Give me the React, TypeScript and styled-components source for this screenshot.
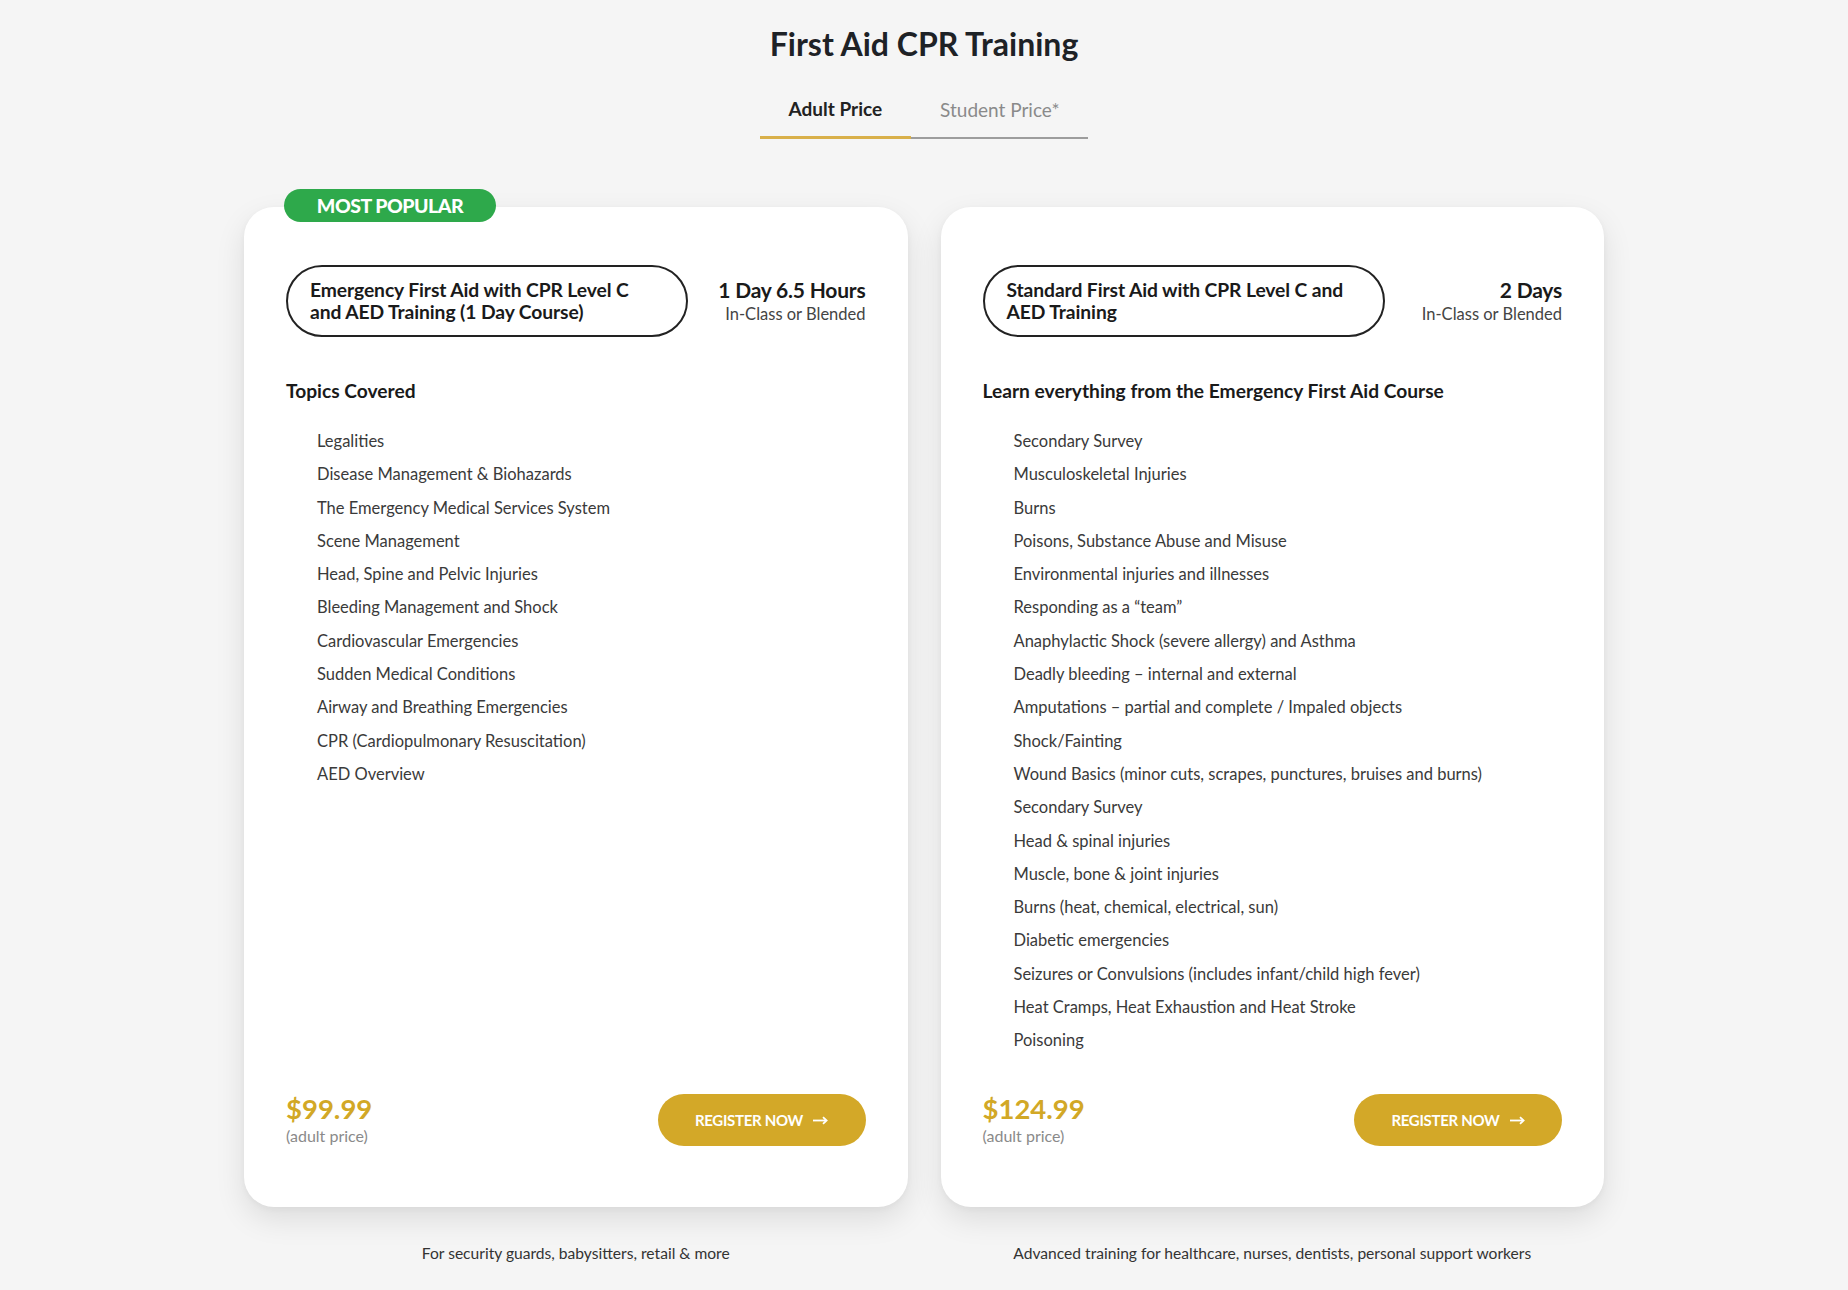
import styled, { createGlobalStyle } from "styled-components";

const GlobalStyle = createGlobalStyle`
  html, body {
    margin: 0;
    padding: 0;
    background: #f5f5f5;
    font-family: Lato, "Open Sans", Arial, sans-serif;
    color: #222;
  }
  * { box-sizing: border-box; }
`;

const Page = styled.main`
  padding: 25px 0 0;
  min-height: 1290px;
`;

const Title = styled.h1`
  margin: 0;
  text-align: center;
  font-size: 32px;
  line-height: 38px;
  font-weight: 700;
  color: #1e2226;
`;

const Tabs = styled.div`
  display: flex;
  justify-content: center;
  align-items: flex-end;
  margin-top: 34px;
`;

const Tab = styled.button<{ $active?: boolean }>`
  border: none;
  background: none;
  font-family: inherit;
  font-size: 19px;
  line-height: 24px;
  padding: 0 29px 15px;
  cursor: pointer;
  font-weight: ${(p) => (p.$active ? 700 : 400)};
  color: ${(p) => (p.$active ? "#222" : "#8a8a8a")};
  border-bottom: ${(p) => (p.$active ? "3px solid #d9b04a" : "2px solid #9d9d9d")};
`;

const Grid = styled.div`
  display: grid;
  grid-template-columns: 1fr 1fr;
  gap: 33px;
  max-width: 1360px;
  margin: 68px auto 0;
`;

const Column = styled.div`
  display: flex;
  flex-direction: column;
`;

const Card = styled.section`
  position: relative;
  flex: 1;
  display: flex;
  flex-direction: column;
  background: #fff;
  border-radius: 30px;
  padding: 58px 42px 60px;
  box-shadow: 0 12px 30px rgba(0, 0, 0, 0.1), 0 2px 6px rgba(0, 0, 0, 0.04);
`;

const Badge = styled.div`
  position: absolute;
  top: -18px;
  left: 40px;
  width: 212px;
  height: 33px;
  border-radius: 17px;
  background: #2ea94b;
  color: #fff;
  font-size: 19.5px;
  font-weight: 900;
  letter-spacing: -0.5px;
  display: flex;
  align-items: center;
  justify-content: center;
  text-transform: uppercase;
`;

const Header = styled.div`
  display: flex;
  align-items: center;
  justify-content: space-between;
`;

const CourseName = styled.div`
  width: 402px;
  height: 72px;
  border: 2px solid #222;
  border-radius: 36px;
  padding: 0 18px 0 22px;
  display: flex;
  align-items: center;
  font-size: 19.3px;
  line-height: 22px;
  font-weight: 700;
  color: #1a1a1a;
  white-space: pre-line;
  letter-spacing: -0.1px;
`;

const Duration = styled.div`
  text-align: right;
  padding-top: 2px;
`;

const Length = styled.div`
  font-size: 21px;
  line-height: 24px;
  font-weight: 700;
  color: #1a1a1a;
  letter-spacing: -0.2px;
`;

const Mode = styled.div`
  font-size: 16.5px;
  line-height: 25px;
  color: #444;
`;

const Heading = styled.h3`
  margin: 42px 0 0;
  font-size: 19.2px;
  line-height: 24px;
  font-weight: 700;
  color: #1a1a1a;
`;

const Topics = styled.ul`
  list-style: none;
  margin: 22px 0 0;
  padding: 0 0 0 31px;
`;

const Topic = styled.li`
  font-size: 16.5px;
  line-height: 33.3px;
  color: #3a3a3a;
`;

const Footer = styled.div`
  margin-top: auto;
  padding-top: 36px;
  display: flex;
  align-items: center;
  justify-content: space-between;
`;

const Price = styled.div`
  font-size: 27.5px;
  line-height: 30px;
  font-weight: 700;
  color: #d2a826;
`;

const PriceNote = styled.div`
  font-size: 16px;
  line-height: 23px;
  color: #8a8a8a;
`;

const Register = styled.button`
  width: 208px;
  height: 52px;
  border: none;
  border-radius: 26px;
  background: #d3a828;
  color: #fff;
  font-family: inherit;
  font-size: 15px;
  font-weight: 700;
  letter-spacing: -0.3px;
  text-transform: uppercase;
  display: flex;
  align-items: center;
  justify-content: center;
  gap: 10px;
  cursor: pointer;
`;

const Caption = styled.p`
  margin: 36px 0 0;
  text-align: center;
  font-size: 15.6px;
  line-height: 20px;
  color: #333;
`;

const Arrow = () => (
  <svg width="15" height="9" viewBox="0 0 15 9" fill="none">
    <path d="M0 4.5h13" stroke="#fff" strokeWidth="1.8" />
    <path d="M10 1.2l3.6 3.3L10 7.8" stroke="#fff" strokeWidth="1.8" fill="none" />
  </svg>
);

type Course = {
  name: string;
  length: string;
  heading: string;
  topics: string[];
  price: string;
  caption: string;
  popular?: boolean;
};

const courses: Course[] = [
  {
    name: "Emergency First Aid with CPR Level C\nand AED Training (1 Day Course)",
    length: "1 Day 6.5 Hours",
    heading: "Topics Covered",
    popular: true,
    price: "$99.99",
    caption: "For security guards, babysitters, retail & more",
    topics: [
      "Legalities",
      "Disease Management & Biohazards",
      "The Emergency Medical Services System",
      "Scene Management",
      "Head, Spine and Pelvic Injuries",
      "Bleeding Management and Shock",
      "Cardiovascular Emergencies",
      "Sudden Medical Conditions",
      "Airway and Breathing Emergencies",
      "CPR (Cardiopulmonary Resuscitation)",
      "AED Overview",
    ],
  },
  {
    name: "Standard First Aid with CPR Level C and\nAED Training",
    length: "2 Days",
    heading: "Learn everything from the Emergency First Aid Course",
    price: "$124.99",
    caption: "Advanced training for healthcare, nurses, dentists, personal support workers",
    topics: [
      "Secondary Survey",
      "Musculoskeletal Injuries",
      "Burns",
      "Poisons, Substance Abuse and Misuse",
      "Environmental injuries and illnesses",
      "Responding as a \u201cteam\u201d",
      "Anaphylactic Shock (severe allergy) and Asthma",
      "Deadly bleeding \u2013 internal and external",
      "Amputations \u2013 partial and complete / Impaled objects",
      "Shock/Fainting",
      "Wound Basics (minor cuts, scrapes, punctures, bruises and burns)",
      "Secondary Survey",
      "Head & spinal injuries",
      "Muscle, bone & joint injuries",
      "Burns (heat, chemical, electrical, sun)",
      "Diabetic emergencies",
      "Seizures or Convulsions (includes infant/child high fever)",
      "Heat Cramps, Heat Exhaustion and Heat Stroke",
      "Poisoning",
    ],
  },
];

export default function App() {
  return (
    <Page>
      <GlobalStyle />
      <Title>First Aid CPR Training</Title>
      <Tabs>
        <Tab $active>Adult Price</Tab>
        <Tab>Student Price*</Tab>
      </Tabs>
      <Grid>
        {courses.map((c) => (
          <Column key={c.price}>
            <Card>
              {c.popular && <Badge>Most Popular</Badge>}
              <Header>
                <CourseName>{c.name}</CourseName>
                <Duration>
                  <Length>{c.length}</Length>
                  <Mode>In-Class or Blended</Mode>
                </Duration>
              </Header>
              <Heading>{c.heading}</Heading>
              <Topics>
                {c.topics.map((t, i) => (
                  <Topic key={i}>{t}</Topic>
                ))}
              </Topics>
              <Footer>
                <div>
                  <Price>{c.price}</Price>
                  <PriceNote>(adult price)</PriceNote>
                </div>
                <Register>
                  Register Now <Arrow />
                </Register>
              </Footer>
            </Card>
            <Caption>{c.caption}</Caption>
          </Column>
        ))}
      </Grid>
    </Page>
  );
}
